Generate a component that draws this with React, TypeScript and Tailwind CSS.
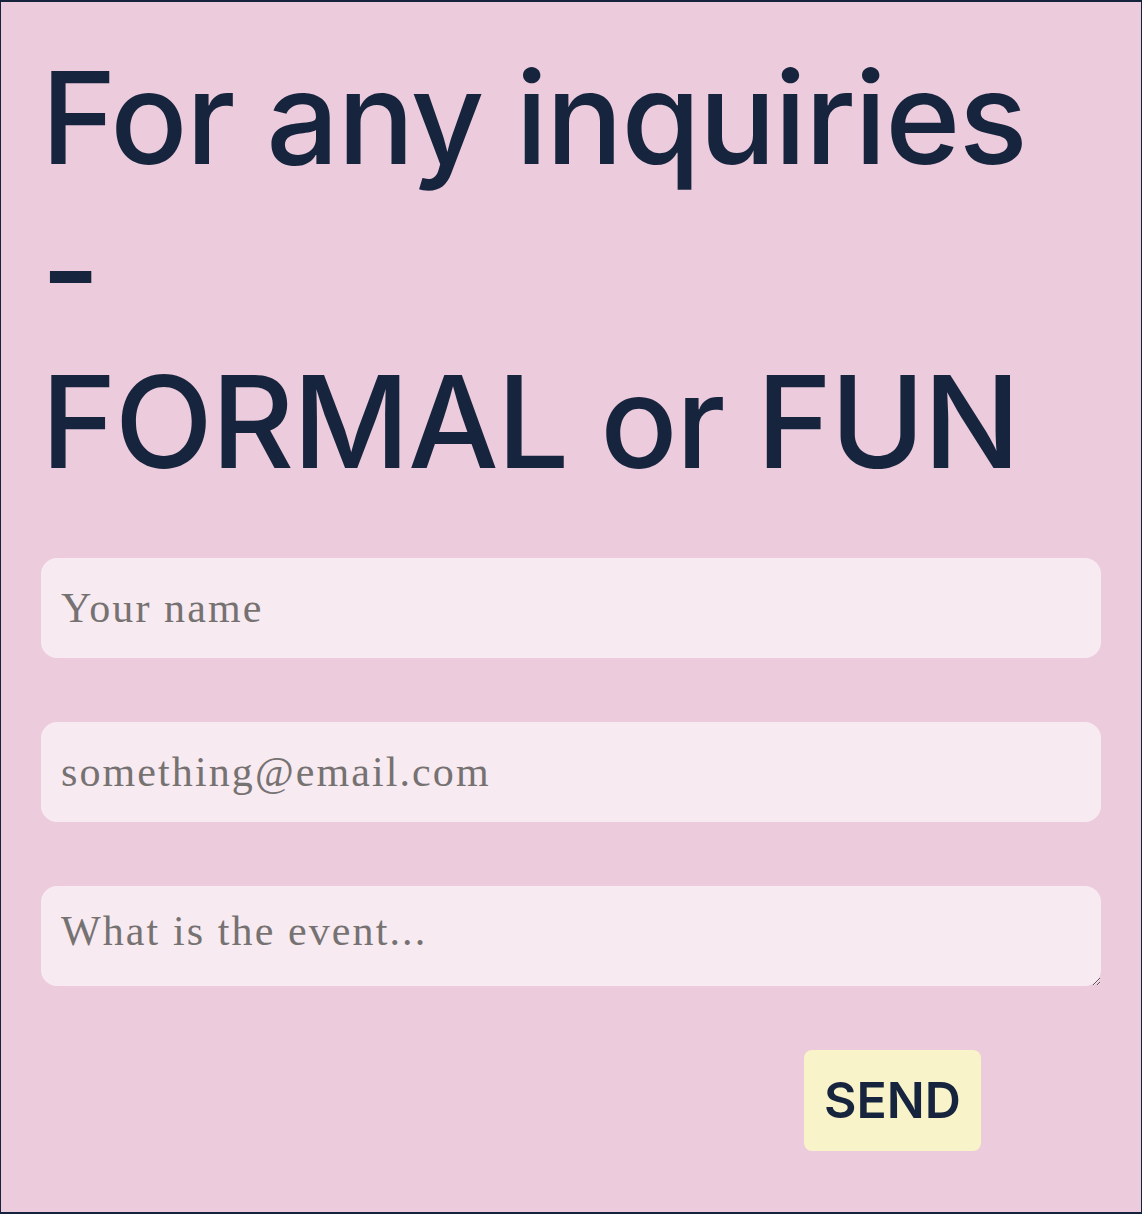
export default function App() {
  return (
    <section className="w-[1142px] border-x border-y-2 border-[#16233d] bg-[#eccbdc] px-10 pt-10 pb-[61px]">
      {/* Heading */}
      <h1 className="mb-[60px] font-['Inter',sans-serif] text-[128px] font-medium leading-[152px] tracking-[-1.6px] text-[#16243e]">
        For any inquiries
        <br />-<br />
        FORMAL or FUN
      </h1>

      {/* Form */}
      <form className="flex flex-col gap-16 font-['Liberation_Serif',serif]">
        <input
          type="text"
          placeholder="Your name"
          className="h-[100px] w-full rounded-2xl bg-[#f8eaf1] px-5 text-[42px] tracking-[0.05em] text-[#16243e] outline-none placeholder:text-[#767272]"
        />
        <input
          type="email"
          placeholder="something@email.com"
          className="h-[100px] w-full rounded-2xl bg-[#f8eaf1] px-5 text-[42px] tracking-[0.05em] text-[#16243e] outline-none placeholder:text-[#767272]"
        />
        <textarea
          placeholder="What is the event..."
          className="block h-[100px] w-full rounded-2xl bg-[#f8eaf1] px-5 pt-[14px] text-[42px] tracking-[0.05em] text-[#16243e] outline-none placeholder:text-[#767272]"
        />
        <div className="flex justify-end pr-[120px]">
          <button
            type="submit"
            className="flex h-[101px] w-[177px] items-center justify-center rounded-lg bg-[#f8f3c8] font-['Inter',sans-serif] text-[50px] font-semibold text-[#16243e]"
          >
            SEND
          </button>
        </div>
      </form>
    </section>
  )
}
